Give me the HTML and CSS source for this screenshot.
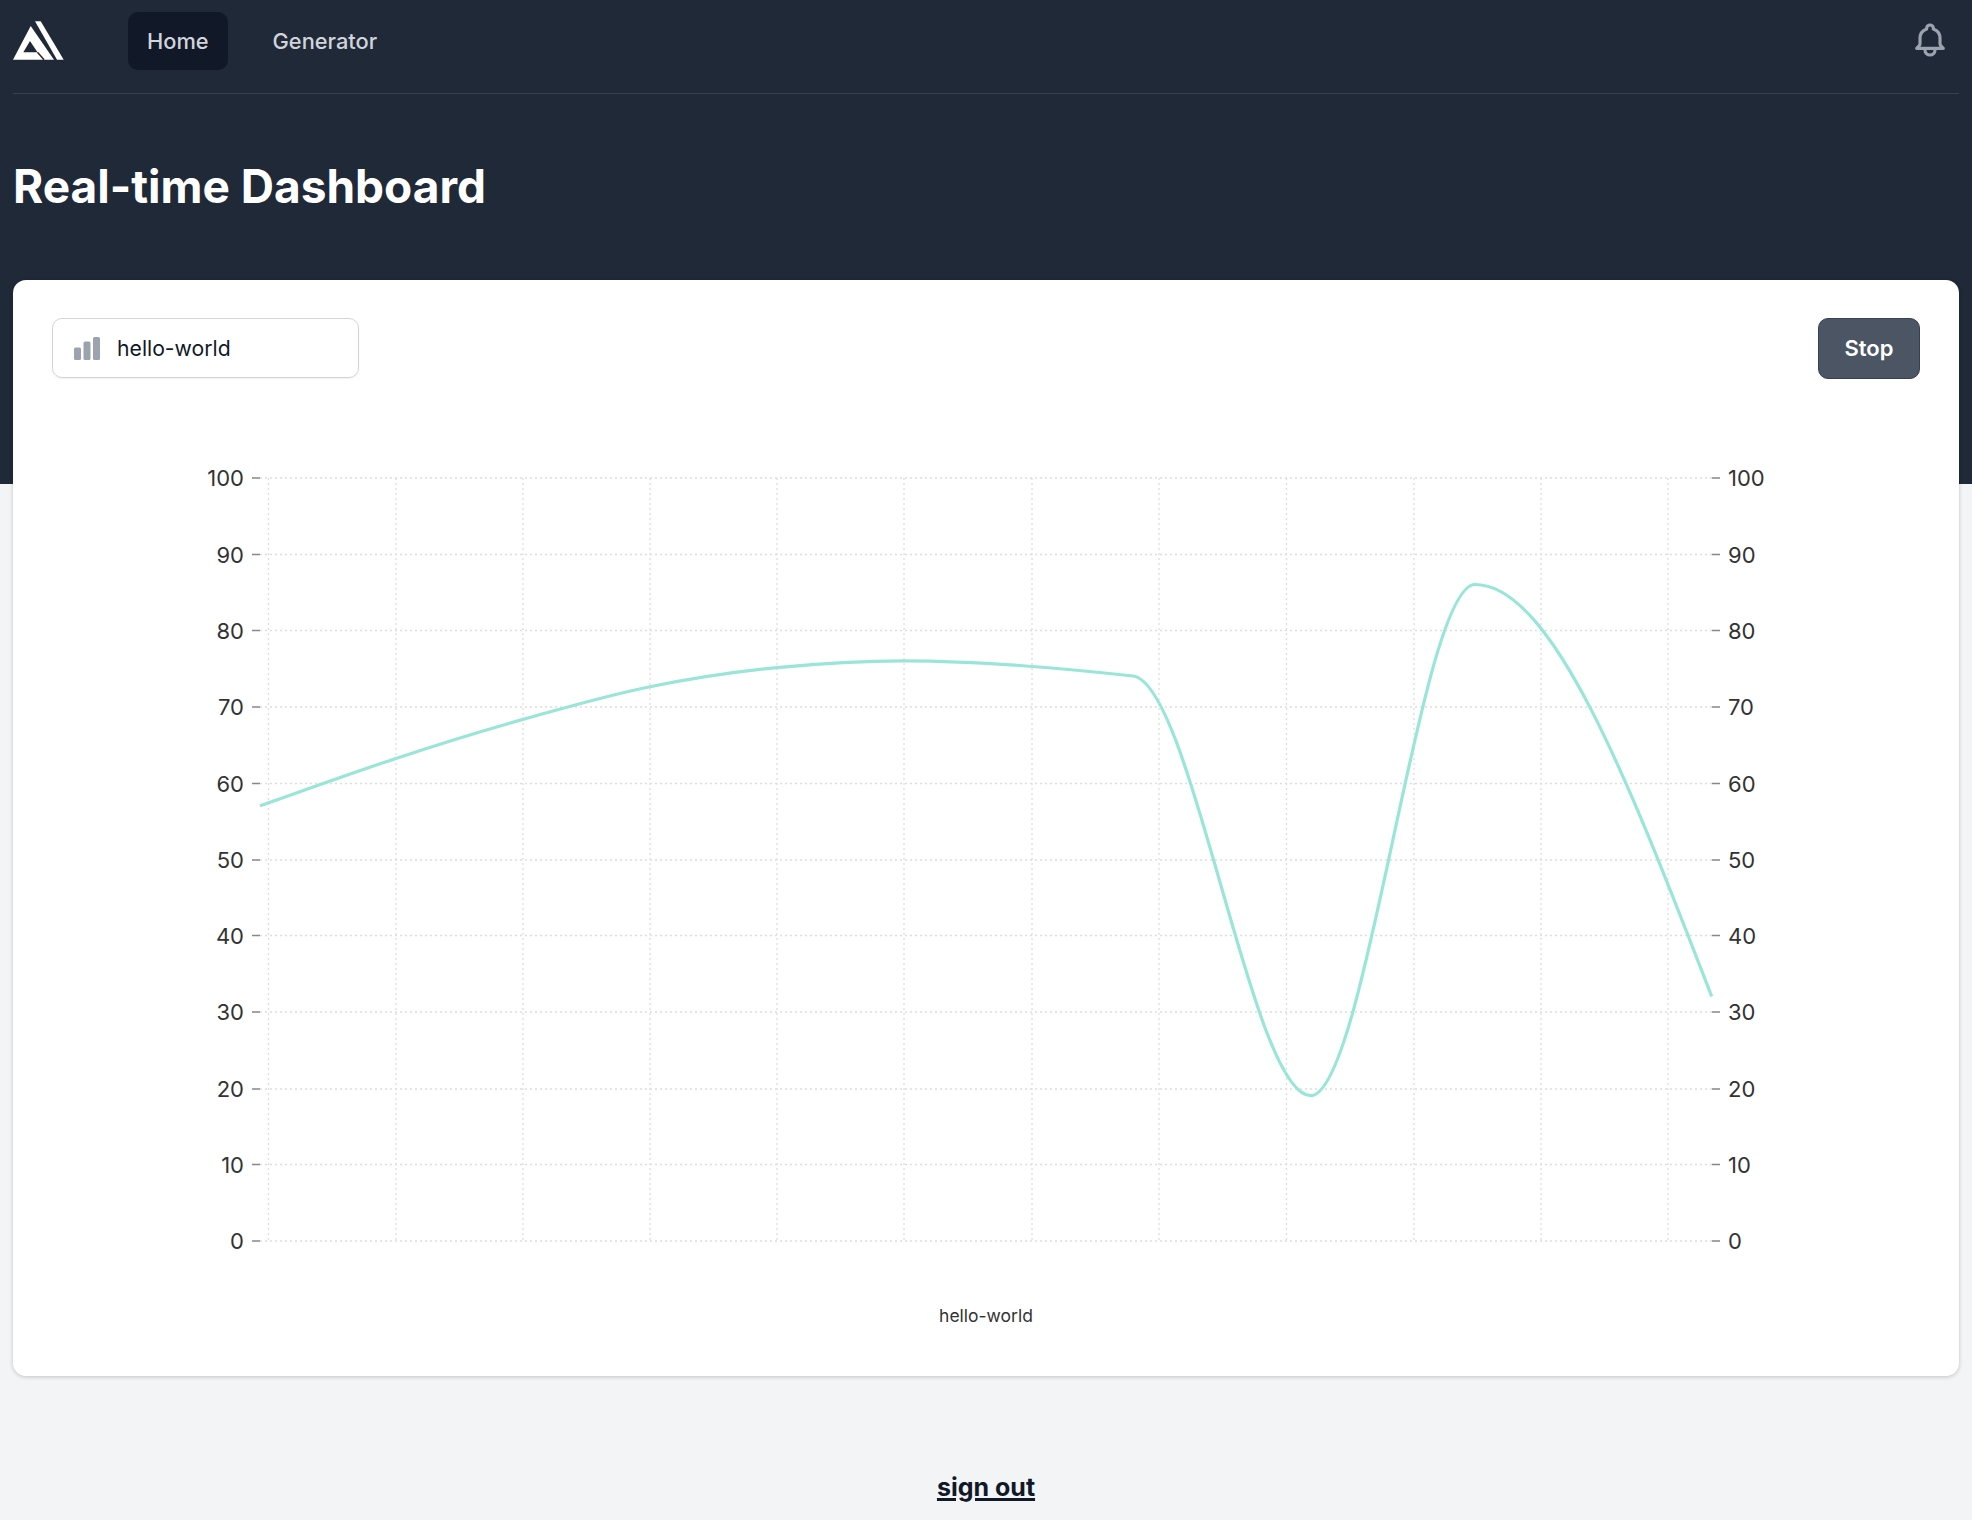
FILE: index.html
```html
<!DOCTYPE html>
<html>
<head>
<meta charset="utf-8" />
<title>Real-time Dashboard</title>
<link rel="stylesheet" href="styles.css">
</head>
<body>
<div class="top">
  <nav class="nav">
    <svg class="logo" viewBox="0 0 52 40" aria-hidden="true">
      <path d="M22 .3h5.700L50.700 38.700H44z" />
      <path fill-rule="evenodd" d="M17.700 5 41 38.700H0zM10.300 31.300H24.500L17 20z" />
      <path class="logo_gap" d="M24.500 31.300 31 38.700" />
    </svg>
    <a class="nav_link active" href="#">Home</a>
    <a class="nav_link" href="#">Generator</a>
    <button class="bell" aria-label="Notifications">
      <svg viewBox="0 0 24 24" width="40" height="40">
        <path d="M15 17h5l-1.405-1.405A2.032 2.032 0 0118 14.158V11a6.002 6.002 0 00-4-5.659V5a2 2 0 10-4 0v.341C7.67 6.165 6 8.388 6 11v3.159c0 .538-.214 1.055-.595 1.436L4 17h5m6 0v1a3 3 0 11-6 0v-1m6 0H9" />
      </svg>
    </button>
  </nav>
  <h1>Real-time Dashboard</h1>
</div>

<main class="card">
  <div class="toolbar">
    <div class="select">
      <svg class="bars" viewBox="0 0 27 23" aria-hidden="true">
        <rect x="0" y="10.500" width="7" height="12.500" rx="1.500" />
        <rect x="9.500" y="4.500" width="7" height="18.500" rx="1.500" />
        <rect x="19" y="0" width="7" height="23" rx="1.500" />
      </svg>
      <span>hello-world</span>
    </div>
    <button class="stop">Stop</button>
  </div>

  <svg class="chart" viewBox="13 420 1946 920" width="1946" height="920">
    <path class="grid" d="M260 478H1712M260 554.500H1712M260 630.500H1712M260 707H1712M260 783.500H1712M260 860H1712M260 935.500H1712M260 1012H1712M260 1089H1712M260 1164.500H1712M260 1241H1712" />
    <path class="grid" d="M268.500 478V1241M396 478V1241M523 478V1241M650 478V1241M777 478V1241M904 478V1241M1032 478V1241M1159 478V1241M1286.500 478V1241M1414 478V1241M1541 478V1241M1668 478V1241" />

    <path class="tick" d="M252 478h8M252 554.500h8M252 630.500h8M252 707h8M252 783.500h8M252 860h8M252 935.500h8M252 1012h8M252 1089h8M252 1164.500h8M252 1241h8" />
    <path class="tick" d="M1712 478h8M1712 554.500h8M1712 630.500h8M1712 707h8M1712 783.500h8M1712 860h8M1712 935.500h8M1712 1012h8M1712 1089h8M1712 1164.500h8M1712 1241h8" />

    <g class="axis_left">
      <text x="244" y="486">100</text>
      <text x="244" y="562.500">90</text>
      <text x="244" y="638.500">80</text>
      <text x="244" y="715">70</text>
      <text x="244" y="791.500">60</text>
      <text x="244" y="868">50</text>
      <text x="244" y="943.500">40</text>
      <text x="244" y="1020">30</text>
      <text x="244" y="1097">20</text>
      <text x="244" y="1172.500">10</text>
      <text x="244" y="1249">0</text>
    </g>
    <g class="axis_right">
      <text x="1728" y="486">100</text>
      <text x="1728" y="562.500">90</text>
      <text x="1728" y="638.500">80</text>
      <text x="1728" y="715">70</text>
      <text x="1728" y="791.500">60</text>
      <text x="1728" y="868">50</text>
      <text x="1728" y="943.500">40</text>
      <text x="1728" y="1020">30</text>
      <text x="1728" y="1097">20</text>
      <text x="1728" y="1172.500">10</text>
      <text x="1728" y="1249">0</text>
    </g>

    <path class="line" d="M260 805.800C305.300 789.900 350.700 773.400 396 758.400C438.300 744.400 480.700 731.300 523 719.400C565.300 707.600 607.700 695.200 650 686.700C692.300 678.200 734.700 671.800 777 667.600C819.300 663.400 861.700 660.800 904 660.800C980.300 660.800 1056.700 667.600 1133 676C1192 683 1251.500 1095.700 1310.700 1095.700C1365.500 1095.700 1420.200 584.500 1475 584.500C1553.900 584.500 1632.800 792.500 1711.700 996.500" />

    <text class="legend" x="986" y="1322">hello-world</text>
  </svg>
</main>

<footer class="footer">
  <a href="#">sign out</a>
</footer>
</body>
</html>
```

FILE: styles.css
```css
* {
  box-sizing: border-box;
}
body {
  margin: 0;
  height: 1520px;
  overflow: hidden;
  background-color: #f3f4f6;
  font-family: Inter, 'Noto Sans', sans-serif;
  color: #111827;
}
.top {
  height: 484px;
  padding: 0 13px;
  background-color: #1f2937;
}
.nav {
  display: flex;
  align-items: center;
  height: 94px;
  padding-bottom: 11px;
  border-bottom: 1px solid #374151;
}
.logo {
  width: 52px;
  height: 40px;
  margin: 0 63px 0 0;
  fill: #fff;
}
.logo_gap {
  fill: none;
  stroke: #1f2937;
  stroke-width: 1.500;
}
.nav_link {
  height: 58px;
  margin-right: 26px;
  padding: 0 19px;
  border-radius: 10px;
  line-height: 58px;
  font-size: 21.800px;
  font-weight: 500;
  color: #d1d5db;
  text-decoration: none;
}
.nav_link.active {
  background-color: #111827;
}
.bell {
  margin: 0 9px 2px auto;
  padding: 0;
  border: 0;
  background: none;
  display: flex;
}
.bell path {
  fill: none;
  stroke: #9ca3af;
  stroke-width: 1.900;
  stroke-linecap: round;
  stroke-linejoin: round;
}
h1 {
  margin: 65px 0 0;
  font-size: 46px;
  line-height: 55px;
  font-weight: 700;
  color: #fff;
}
.card {
  height: 1096px;
  margin: -204px 13px 0;
  background-color: #fff;
  border-radius: 13px;
  box-shadow: 0 1px 4px rgba(0, 0, 0, .2);
}
.toolbar {
  display: flex;
  justify-content: space-between;
  height: 140px;
  padding: 38px 39px 0;
}
.select {
  display: flex;
  align-items: center;
  width: 307px;
  height: 60px;
  padding-left: 21px;
  border: 1px solid #d1d5db;
  border-radius: 10px;
  box-shadow: 0 1px 2px rgba(0, 0, 0, .06);
  font-size: 21.200px;
}
.bars {
  width: 27px;
  height: 23px;
  margin-right: 16px;
  fill: #9ca3af;
}
.stop {
  width: 102px;
  height: 61px;
  padding: 0 0 1px;
  border: 1px solid #374151;
  border-radius: 10px;
  background-color: #4b5563;
  font-family: inherit;
  font-size: 22px;
  font-weight: 600;
  color: #fff;
}
.chart {
  display: block;
}
.grid {
  fill: none;
  stroke: #ddd;
  stroke-width: 1.300;
  stroke-dasharray: 2 3;
}
.tick {
  fill: none;
  stroke: #888;
  stroke-width: 1.500;
}
.line {
  fill: none;
  stroke: #99e6d8;
  stroke-width: 3.200;
}
.axis_left text,
.axis_right text {
  font-size: 22px;
  fill: #333;
}
.axis_left text {
  text-anchor: end;
}
.legend {
  font-size: 17.500px;
  text-anchor: middle;
  fill: #333;
}
.footer {
  padding-top: 91px;
  text-align: center;
  line-height: 40px;
}
.footer a {
  font-size: 25px;
  font-weight: 700;
  color: #111827;
  text-decoration-thickness: 2.500px;
}
```
